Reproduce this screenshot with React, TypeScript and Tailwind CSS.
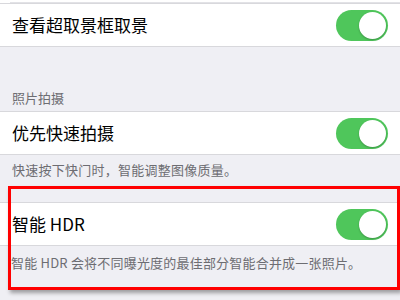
import type { ReactNode } from 'react'

const FONT = { fontFamily: '"Noto Sans CJK SC", "Noto Sans", sans-serif' }

function Toggle() {
  return (
    <div className="relative h-[31px] w-[52px] rounded-full bg-[#4fc65b]">
      <div className="absolute right-[2px] top-[2px] h-[27px] w-[27px] rounded-full bg-white shadow-[0_1px_2px_rgba(0,0,0,0.25)]" />
    </div>
  )
}

function Row({ label }: { label: ReactNode }) {
  return (
    <div className="flex h-[44px] items-center justify-between border-y border-[#d8d8dc] bg-white pl-[12px] pr-[12px]">
      <span className="text-[17px] text-black">{label}</span>
      <Toggle />
    </div>
  )
}

export default function App() {
  return (
    <div className="relative h-[300px] w-[400px] overflow-hidden bg-[#efeff4]" style={FONT}>
      {/* tail of the previous row */}
      <div className="h-[3px] bg-white pl-[10px]">
        <div className="h-full border-b border-[#e2e2e6]" />
      </div>

      <Row label="查看超取景框取景" />

      {/* section header */}
      <div className="flex h-[64px] items-end pb-[4px] pl-[12px] text-[13px] text-[#6d6d72]">
        照片拍摄
      </div>

      <Row label="优先快速拍摄" />

      <div className="h-[47px] pl-[12px] pt-[5px] text-[13px] tracking-[0.25px] text-[#6d6d72]">
        快速按下快门时，智能调整图像质量。
      </div>

      <Row label="智能 HDR" />

      <div className="pl-[11px] pt-[7px] text-[13px] tracking-[0.2px] text-[#6d6d72]">
        智能 HDR 会将不同曝光度的最佳部分智能合并成一张照片。
      </div>

      {/* highlight box */}
      <div className="absolute left-[8px] top-[186px] h-[104px] w-[392px] border-[3px] border-[#ff0000] shadow-[2px_3px_4px_rgba(0,0,0,0.35)]" />
    </div>
  )
}
